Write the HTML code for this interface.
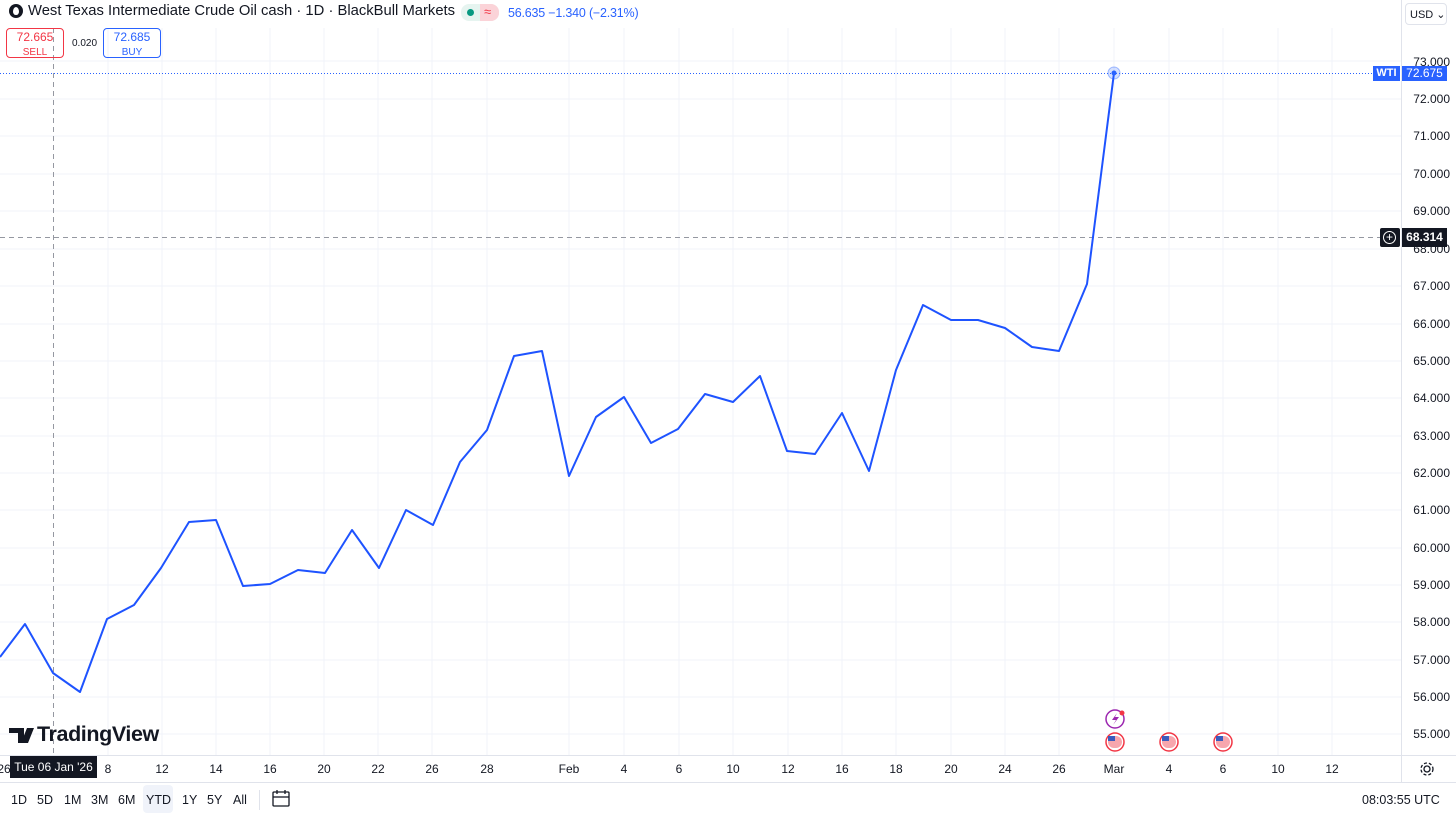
<!DOCTYPE html><html><head><style>
body{margin:0;width:1456px;height:815px;background:#fff;font-family:"Liberation Sans",sans-serif;overflow:hidden;position:relative;color:#131722}
.a{position:absolute}
.pl{position:absolute;right:6px;font-size:12px;color:#131722;transform:translateY(-50%)}
.tl{position:absolute;top:762px;font-size:12px;transform:translateX(-50%)}
.bt{position:absolute;top:793px;font-size:12.5px}
</style></head><body>
<svg class="a" style="left:0;top:0" width="1456" height="815">
<g stroke="#f0f3fa" stroke-width="1">
<line x1="0" x2="1401" y1="61" y2="61"/><line x1="0" x2="1401" y1="99" y2="99"/><line x1="0" x2="1401" y1="136" y2="136"/><line x1="0" x2="1401" y1="174" y2="174"/><line x1="0" x2="1401" y1="211" y2="211"/><line x1="0" x2="1401" y1="249" y2="249"/><line x1="0" x2="1401" y1="286" y2="286"/><line x1="0" x2="1401" y1="324" y2="324"/><line x1="0" x2="1401" y1="361" y2="361"/><line x1="0" x2="1401" y1="398" y2="398"/><line x1="0" x2="1401" y1="436" y2="436"/><line x1="0" x2="1401" y1="473" y2="473"/><line x1="0" x2="1401" y1="510" y2="510"/><line x1="0" x2="1401" y1="548" y2="548"/><line x1="0" x2="1401" y1="585" y2="585"/><line x1="0" x2="1401" y1="622" y2="622"/><line x1="0" x2="1401" y1="660" y2="660"/><line x1="0" x2="1401" y1="697" y2="697"/><line x1="0" x2="1401" y1="734" y2="734"/>
</g>
<g stroke="#f0f3fa">
<line x1="108" x2="108" y1="28" y2="755"/><line x1="162" x2="162" y1="28" y2="755"/><line x1="216" x2="216" y1="28" y2="755"/><line x1="270" x2="270" y1="28" y2="755"/><line x1="324" x2="324" y1="28" y2="755"/><line x1="378" x2="378" y1="28" y2="755"/><line x1="432" x2="432" y1="28" y2="755"/><line x1="487" x2="487" y1="28" y2="755"/><line x1="569" x2="569" y1="28" y2="755"/><line x1="624" x2="624" y1="28" y2="755"/><line x1="679" x2="679" y1="28" y2="755"/><line x1="733" x2="733" y1="28" y2="755"/><line x1="788" x2="788" y1="28" y2="755"/><line x1="842" x2="842" y1="28" y2="755"/><line x1="896" x2="896" y1="28" y2="755"/><line x1="951" x2="951" y1="28" y2="755"/><line x1="1005" x2="1005" y1="28" y2="755"/><line x1="1059" x2="1059" y1="28" y2="755"/><line x1="1114" x2="1114" y1="28" y2="755"/><line x1="1169" x2="1169" y1="28" y2="755"/><line x1="1223" x2="1223" y1="28" y2="755"/><line x1="1278" x2="1278" y1="28" y2="755"/><line x1="1332" x2="1332" y1="28" y2="755"/>
</g>
<line x1="0" x2="1456" y1="755.5" y2="755.5" stroke="#e0e3eb"/>
<line x1="0" x2="1456" y1="782.5" y2="782.5" stroke="#e0e3eb"/>
<line x1="1401.5" x2="1401.5" y1="0" y2="782" stroke="#e0e3eb"/>
<line x1="0" x2="1401" y1="73.5" y2="73.5" stroke="#2962ff" stroke-dasharray="1 2"/>
<line x1="0" x2="1380" y1="237.5" y2="237.5" stroke="#9598a1" stroke-dasharray="5 4"/>
<line x1="53.5" x2="53.5" y1="28" y2="755" stroke="#9598a1" stroke-dasharray="5 4"/>
<polyline fill="none" stroke="#1e53ff" stroke-width="2" stroke-linejoin="round" points="0,657 25,624 53,673 80,692 107,619 134,605 161,568 189,522 216,520 243,586 270,584 298,570 325,573 352,530 379,568 406,510 433,525 460,462 487,430 514,356 542,351 569,476 596,417 624,397 651,443 678,429 705,394 733,402 760,376 787,451 815,454 842,413 869,471 896,370 923,305 951,320 978,320 1005,328 1032,347 1059,351 1087,284 1114,73"/>
<circle cx="1114" cy="73" r="6" fill="#2962ff" fill-opacity=".2" stroke="#2962ff" stroke-opacity=".4"/><circle cx="1114" cy="73" r="2.5" fill="#2962ff"/>
<circle cx="1115" cy="719" r="9" fill="#fff" stroke="#9c27b0" stroke-width="1.5"/><path d="M1117 713 L1112 720 H1116 L1113 725 L1119 717 H1115 Z" fill="#9c27b0"/><circle cx="1122" cy="713" r="2.5" fill="#f23645"/>
<g><circle cx="1115" cy="742" r="9" fill="#fff" stroke="#f23645" stroke-width="1.5"/><rect x="1108" y="736" width="14" height="12" rx="6" fill="#f7a6ad"/><rect x="1108" y="736" width="7" height="5" fill="#3b5bbd"/></g>
<g><circle cx="1169" cy="742" r="9" fill="#fff" stroke="#f23645" stroke-width="1.5"/><rect x="1162" y="736" width="14" height="12" rx="6" fill="#f7a6ad"/><rect x="1162" y="736" width="7" height="5" fill="#3b5bbd"/></g>
<g><circle cx="1223" cy="742" r="9" fill="#fff" stroke="#f23645" stroke-width="1.5"/><rect x="1216" y="736" width="14" height="12" rx="6" fill="#f7a6ad"/><rect x="1216" y="736" width="7" height="5" fill="#3b5bbd"/></g>
<path d="M9 728 H24 V743 H18 V733 H9Z M27 728 H34 L28 743 H21Z" fill="#131722"/>
<line x1="259.5" x2="259.5" y1="790" y2="810" stroke="#e0e3eb"/>
<g fill="none" stroke="#131722" stroke-width="1.3"><rect x="273" y="792" width="16" height="14" rx="1"/><line x1="273" x2="289" y1="797" y2="797"/><line x1="277" x2="277" y1="790" y2="794"/><line x1="285" x2="285" y1="790" y2="794"/></g>
<g fill="none" stroke="#131722" stroke-width="1.3"><circle cx="1427" cy="769" r="3"/><circle cx="1427" cy="769" r="6" stroke-dasharray="3 2"/></g>
</svg>
<div class="a" style="left:9px;top:4px;width:14px;height:14px;border-radius:50%;background:#131722"></div>
<div class="a" style="left:13px;top:7px;width:6px;height:8px;border-radius:50% 50% 50% 50%/60% 60% 40% 40%;background:#fff"></div>
<div class="a" style="left:28px;top:3px;font-size:14.8px">West Texas Intermediate Crude Oil cash · 1D · BlackBull Markets</div>
<div class="a" style="left:461px;top:4px;width:38px;height:17px;border-radius:8px;background:#e6f4f0;overflow:hidden"><div class="a" style="left:19px;top:0;width:19px;height:17px;background:#fbd3d8"></div><div class="a" style="left:6px;top:5px;width:7px;height:7px;border-radius:50%;background:#089981"></div><div class="a" style="left:23px;top:0;font-size:13px;color:#f23645">≈</div></div>
<div class="a" style="left:508px;top:6px;font-size:12.5px;color:#2962ff;letter-spacing:-0.2px">56.635 −1.340 (−2.31%)</div>
<div class="a" style="left:6px;top:28px;width:58px;height:30px;border:1px solid #f23645;border-radius:4px;color:#f23645;text-align:center;font-size:12px;line-height:14px;padding-top:1px;box-sizing:border-box">72.665<br><span style="font-size:10px">SELL</span></div>
<div class="a" style="left:72px;top:38px;font-size:10px">0.020</div>
<div class="a" style="left:103px;top:28px;width:58px;height:30px;border:1px solid #2962ff;border-radius:4px;color:#2962ff;text-align:center;font-size:12px;line-height:14px;padding-top:1px;box-sizing:border-box">72.685<br><span style="font-size:10px">BUY</span></div>
<div class="a" style="left:1405px;top:3px;width:42px;height:22px;border:1px solid #e0e3eb;border-radius:4px;font-size:11px;line-height:22px;padding-left:4px;box-sizing:border-box">USD ⌄</div>
<div class="pl" style="top:62px">73.000</div><div class="pl" style="top:99px">72.000</div><div class="pl" style="top:136px">71.000</div><div class="pl" style="top:174px">70.000</div><div class="pl" style="top:211px">69.000</div><div class="pl" style="top:249px">68.000</div><div class="pl" style="top:286px">67.000</div><div class="pl" style="top:324px">66.000</div><div class="pl" style="top:361px">65.000</div><div class="pl" style="top:398px">64.000</div><div class="pl" style="top:436px">63.000</div><div class="pl" style="top:473px">62.000</div><div class="pl" style="top:510px">61.000</div><div class="pl" style="top:548px">60.000</div><div class="pl" style="top:585px">59.000</div><div class="pl" style="top:622px">58.000</div><div class="pl" style="top:660px">57.000</div><div class="pl" style="top:697px">56.000</div><div class="pl" style="top:734px">55.000</div>
<div class="a" style="left:1373px;top:66px;width:27px;height:15px;background:#2962ff;color:#fff;font-size:11px;font-weight:bold;text-align:center;line-height:15px">WTI</div>
<div class="a" style="left:1402px;top:66px;width:45px;height:15px;background:#2962ff;color:#fff;font-size:12px;text-align:center;line-height:15px">72.675</div>
<div class="a" style="left:1380px;top:228px;width:20px;height:19px;background:#131722;border-radius:2px"><div class="a" style="left:3px;top:3px;width:11px;height:11px;border:1.3px solid #fff;border-radius:50%;color:#fff;font-size:12px;line-height:11px;text-align:center">+</div></div>
<div class="a" style="left:1402px;top:228px;width:45px;height:19px;background:#131722;color:#fff;font-size:12px;font-weight:bold;text-align:center;line-height:19px">68.314</div>
<div class="a" style="left:37px;top:722px;font-size:21.5px;font-weight:bold;letter-spacing:-0.4px">TradingView</div>
<div class="tl" style="left:4px">26</div>
<div class="a" style="left:10px;top:756px;width:87px;height:22px;background:#131722;color:#fff;font-size:12px;line-height:22px;text-align:center">Tue 06 Jan '26</div>
<div class="tl" style="left:108px">8</div><div class="tl" style="left:162px">12</div><div class="tl" style="left:216px">14</div><div class="tl" style="left:270px">16</div><div class="tl" style="left:324px">20</div><div class="tl" style="left:378px">22</div><div class="tl" style="left:432px">26</div><div class="tl" style="left:487px">28</div><div class="tl" style="left:569px">Feb</div><div class="tl" style="left:624px">4</div><div class="tl" style="left:679px">6</div><div class="tl" style="left:733px">10</div><div class="tl" style="left:788px">12</div><div class="tl" style="left:842px">16</div><div class="tl" style="left:896px">18</div><div class="tl" style="left:951px">20</div><div class="tl" style="left:1005px">24</div><div class="tl" style="left:1059px">26</div><div class="tl" style="left:1114px">Mar</div><div class="tl" style="left:1169px">4</div><div class="tl" style="left:1223px">6</div><div class="tl" style="left:1278px">10</div><div class="tl" style="left:1332px">12</div>
<div class="a" style="left:143px;top:785px;width:30px;height:28px;background:#f0f3fa;border-radius:4px"></div>
<div class="bt" style="left:11px">1D</div><div class="bt" style="left:37px">5D</div><div class="bt" style="left:64px">1M</div><div class="bt" style="left:91px">3M</div><div class="bt" style="left:118px">6M</div><div class="bt" style="left:146px">YTD</div><div class="bt" style="left:182px">1Y</div><div class="bt" style="left:207px">5Y</div><div class="bt" style="left:233px">All</div>
<div class="bt" style="left:1362px">08:03:55 UTC</div>
</body></html>
